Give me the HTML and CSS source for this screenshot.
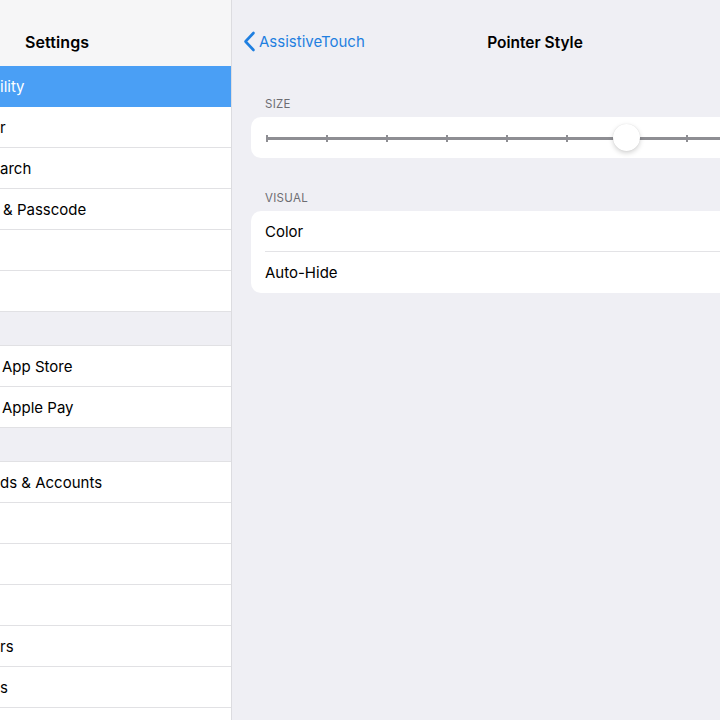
FILE: index.html
```html
<!DOCTYPE html>
<html>
<head>
<meta charset="utf-8">
<link rel="stylesheet" href="styles.css">
</head>
<body>
<div class="screen">
  <aside class="sidebar">
    <div class="side-header"><span class="side-title">Settings</span></div>
    <div class="group first">
      <div class="row selected">ility</div>
      <div class="row">r</div>
      <div class="row">arch</div>
      <div class="row indent">&amp; Passcode</div>
      <div class="row"></div>
      <div class="row"></div>
    </div>
    <div class="gap"></div>
    <div class="group">
      <div class="row indent2">App Store</div>
      <div class="row indent2">Apple Pay</div>
    </div>
    <div class="gap"></div>
    <div class="group">
      <div class="row">ds &amp; Accounts</div>
      <div class="row"></div>
      <div class="row"></div>
      <div class="row"></div>
      <div class="row">rs</div>
      <div class="row">s</div>
      <div class="row"></div>
    </div>
  </aside>
  <main class="main">
    <div class="navbar">
      <div class="back">
        <svg class="chev" width="13" height="21" viewBox="0 0 13 21"><polyline points="10.5,2 2.5,10.5 10.5,19" fill="none" stroke="#1f7fe0" stroke-width="2.6" stroke-linecap="round" stroke-linejoin="round"/></svg>
        <span>AssistiveTouch</span>
      </div>
      <div class="nav-title">Pointer Style</div>
    </div>
    <div class="section-label first-label">SIZE</div>
    <div class="card slider-card">
      <div class="slider">
        <div class="ticks">
          <span></span><span></span><span></span><span></span><span></span><span></span><span></span><span></span><span></span><span></span>
        </div>
        <div class="thumb" style="left: 347px"></div>
      </div>
    </div>
    <div class="section-label">VISUAL</div>
    <div class="card">
      <div class="cell">Color</div>
      <div class="cell last">Auto-Hide</div>
    </div>
  </main>
</div>
</body>
</html>
```
FILE: styles.css
```css
html, body {
  margin: 0;
  padding: 0;
  width: 720px;
  height: 720px;
  overflow: hidden;
  background: #efeff4;
  font-family: "Inter", "Liberation Sans", sans-serif;
  color: #000;
}
.screen {
  display: flex;
  width: 720px;
  height: 720px;
  overflow: hidden;
}
.sidebar {
  flex: 0 0 231px;
  width: 231px;
  border-right: 1px solid #dcdce0;
  background: #efeff4;
  display: flex;
  flex-direction: column;
}
.sidebar > * {
  flex-shrink: 0;
}
.side-header {
  height: 66px;
  box-sizing: border-box;
  padding: 30px 0 0 25px;
  background: #f6f6f7;
}
.side-title {
  font-size: 16px;
  font-weight: 600;
  line-height: 24px;
  letter-spacing: 0.1px;
}
.group {
  background: #fff;
  border-top: 1px solid #e1e1e4;
}
.group.first {
  border-top: none;
}
.row {
  height: 40px;
  line-height: 42px;
  border-bottom: 1px solid #e1e1e4;
  font-size: 15px;
  padding-left: 0;
  white-space: nowrap;
  overflow: hidden;
}
.row.indent {
  padding-left: 3px;
}
.row.indent2 {
  padding-left: 2px;
}
.row.selected {
  background: #4a9ff5;
  color: #fff;
  border-bottom-color: #4a9ff5;
}
.gap {
  height: 33px;
}
.main {
  flex: 0 0 606px;
  width: 606px;
  padding: 0 19px;
  box-sizing: border-box;
}
.navbar {
  height: 66px;
  position: relative;
  display: flex;
  align-items: center;
  justify-content: center;
  padding-top: 18px;
  box-sizing: border-box;
}
.back {
  position: absolute;
  left: -8px;
  top: 31px;
  display: flex;
  align-items: center;
  gap: 3px;
  color: #1f7fe0;
  font-size: 15px;
}
.chev {
  display: block;
}
.nav-title {
  font-size: 15.5px;
  font-weight: 600;
  margin-top: 0;
}
.section-label {
  font-size: 11.5px;
  color: #6d6d72;
  letter-spacing: 0.3px;
  padding-left: 14px;
  margin: 33px 0 6px;
  line-height: 14px;
}
.section-label.first-label {
  margin-top: 31px;
}
.card {
  background: #fff;
  border-radius: 10px;
  overflow: hidden;
}
.slider-card {
  height: 41px;
  padding: 0 0 0 15px;
  display: flex;
  align-items: center;
}
.slider {
  position: relative;
  width: 542px;
  height: 10px;
  margin-top: 1px;
  background: linear-gradient(#8e8e93, #8e8e93) center / 100% 3px no-repeat;
}
.ticks {
  display: flex;
  justify-content: space-between;
  align-items: center;
  height: 10px;
}
.ticks span {
  width: 2px;
  height: 7px;
  background: #8e8e93;
}
.thumb {
  position: absolute;
  top: -9px;
  width: 27px;
  height: 27px;
  border-radius: 50%;
  background: #fff;
  box-shadow: 0 2px 5px rgba(0, 0, 0, 0.18), 0 0 1px rgba(0, 0, 0, 0.12);
}
.cell {
  margin-left: 14px;
  height: 41px;
  line-height: 42px;
  font-size: 15px;
  border-bottom: 1px solid #e3e3e6;
  box-sizing: border-box;
}
.cell.last {
  border-bottom: none;
}
```
